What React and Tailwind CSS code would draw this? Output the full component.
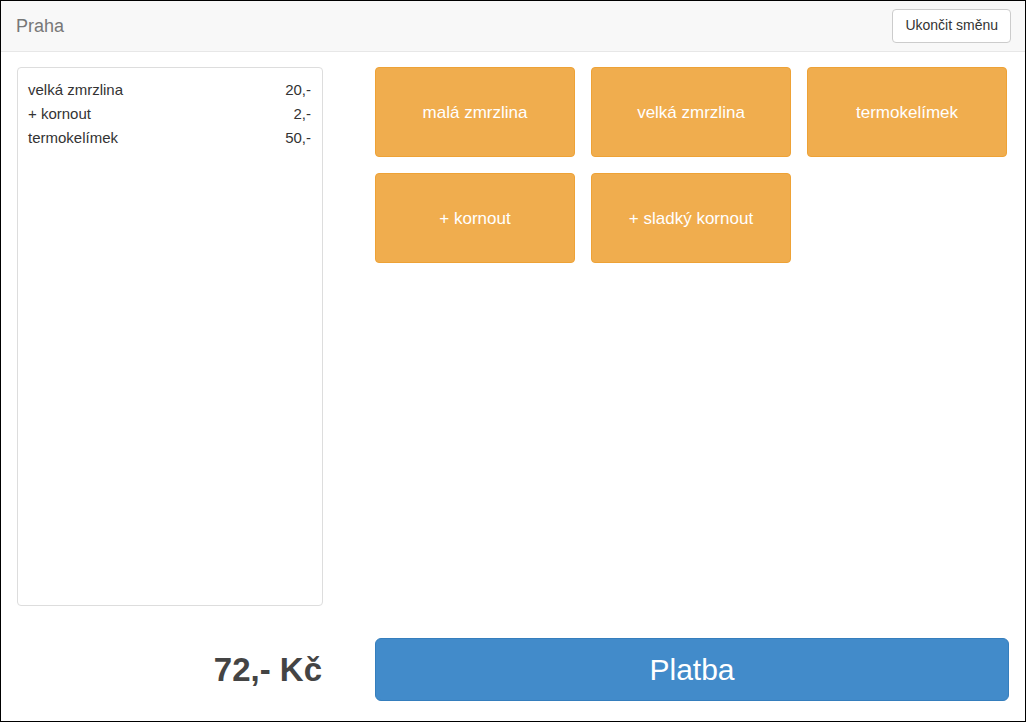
export default function App() {
  const items = [
    ["velká zmrzlina", "20,-"],
    ["+ kornout", "2,-"],
    ["termokelímek", "50,-"],
  ];
  const buttons = ["malá zmrzlina", "velká zmrzlina", "termokelímek", "+ kornout", "+ sladký kornout"];
  return (
    <div
      className="w-[1026px] h-[722px] border border-black bg-white flex flex-col"
      style={{ fontFamily: '"Liberation Sans", Arial, sans-serif' }}
    >
      <div className="h-[51px] shrink-0 bg-[#f8f8f8] border-b border-[#e7e7e7] flex items-center justify-between pl-[15px] pr-[14px]">
        <span className="text-[18px] text-[#777]">Praha</span>
        <button className="h-[34px] px-[12px] bg-white border border-[#ccc] rounded-[4px] text-[14px] text-[#333] mt-[-1px]">
          Ukončit směnu
        </button>
      </div>
      <div className="flex-1 flex flex-col px-[16px] pt-[15px] pb-[20px]">
        <div className="flex-1 flex gap-[52px] min-h-0">
          <div className="w-[306px] shrink-0 border border-[#ddd] rounded-[4px] pt-[10px] pl-[10px] pr-[11px] text-[15px] text-[#333]">
            {items.map(([n, p], i) => (
              <div key={i} className="flex justify-between h-[24px] leading-[24px]">
                <span>{n}</span>
                <span>{p}</span>
              </div>
            ))}
          </div>
          <div className="flex-1 grid grid-cols-[200px_200px_200px] auto-rows-[90px] gap-[16px] content-start">
            {buttons.map((b, i) => (
              <button
                key={i}
                className="bg-[#f0ad4e] border border-[#eea236] rounded-[4px] text-white text-[17px] flex items-center justify-center pt-[2px]"
              >
                {b}
              </button>
            ))}
          </div>
        </div>
        <div className="h-[63px] mt-[32px] shrink-0 flex gap-[52px]">
          <div className="w-[306px] shrink-0 flex items-center justify-end pr-[1px] text-[33px] font-bold text-[#444]">
            72,- Kč
          </div>
          <button className="flex-1 bg-[#428bca] border border-[#357ebd] rounded-[6px] text-white text-[30px] flex items-center justify-center">
            Platba
          </button>
        </div>
      </div>
    </div>
  );
}
